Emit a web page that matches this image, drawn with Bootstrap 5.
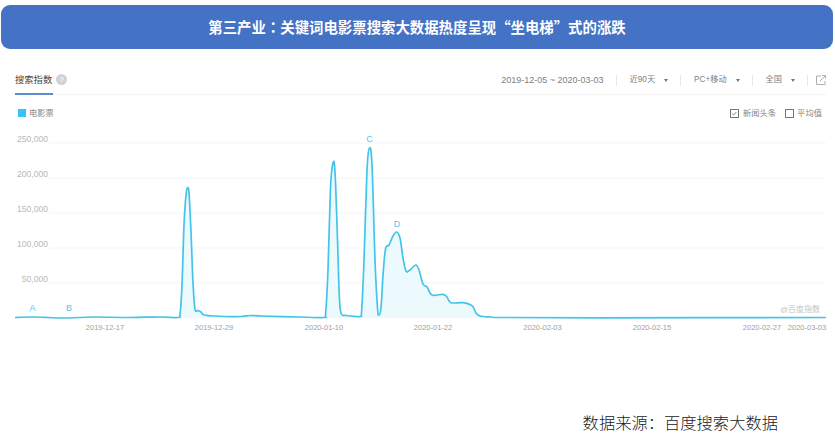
<!DOCTYPE html>
<html lang="zh-CN">
<head>
    <meta charset="UTF-8">
    <meta name="viewport" content="width=device-width, initial-scale=1.0">
    <title>搜索指数</title>
    <link href="https://cdn.jsdelivr.net/npm/bootstrap@5.3.3/dist/css/bootstrap.min.css" rel="stylesheet">
    <style>
        body { font-family: "Liberation Sans", "Noto Sans CJK SC", sans-serif; background: #fff; }
        .title-bar { height: 44px; margin: 5px 2px 0 1px; background: #4472c4; border-radius: 9px; font-family: "Noto Sans CJK SC", sans-serif; font-size: 14.4px; }
        .title-colon { font-family: "Noto Sans CJK TC", sans-serif; }
        .tab-row { height: 46px; margin: 0 9px 0 15px; border-bottom: 1px solid #f3f3f3; }
        .tab-on { height: 46px; margin-bottom: -1px; width: 38px; border-bottom: 2px solid #5b8ccf; color: #444; font-size: 9.3px; white-space: nowrap; padding-top: 24px; line-height: 14px; }
        .help-dot { width: 11px; height: 11px; background: #d2d2d2; color: #fff; font-size: 8px; line-height: 11px; text-align: center; margin-top: 25px; margin-left: 3px; }
        .tool-text { color: #808080; font-size: 8.2px; line-height: 14px; white-space: nowrap; padding-top: 24px; height: 38px; }
        .tool-date { font-size: 9px; }
        .tool-sep { width: 1px; height: 11px; background: #e8e8e8; margin-left: 12px; margin-right: 13px; }
        .tool-caret { width: 0; height: 0; border-left: 2px solid transparent; border-right: 2px solid transparent; border-top: 3px solid #777; margin-left: 9px; }
        .legend-row { height: 35px; margin: 0 13px 0 18px; color: #888; font-size: 8.3px; padding-top: 1px; }
        .legend-dot { width: 8px; height: 8px; background: #35c4f4; margin-right: 3px; }
        .tick-box { width: 9px; height: 9px; border: 1px solid #777; margin-right: 3px; }
        .tick-first { margin-right: 4px; }
        .tick-next { margin-left: 9px; }
        .chart-box { display: block; width: 835px; height: 210px; }
        .grid-line { stroke: #f5f5f5; stroke-width: 1; }
        .val-label { fill: #b9b9b9; font-size: 8.6px; text-anchor: end; }
        .date-label { fill: #a0a0a0; font-size: 7.5px; text-anchor: middle; }
        .point-label { fill: #55c6ef; font-size: 9px; text-anchor: middle; }
        .brand-label { fill: #c6c6c6; font-size: 8px; text-anchor: end; }
        .source-line { margin-top: 73px; padding-right: 57px; color: #222; font-family: "Noto Sans CJK SC", sans-serif; font-size: 16.3px; font-weight: 300; line-height: 19px; }
    </style>
</head>
<body>
    <div class="title-bar d-flex align-items-center justify-content-center text-white fw-bold"><span>第三产业<span class="title-colon" lang="zh-TW">：</span>关键词电影票搜索大数据热度呈现“坐电梯”式的涨跌</span></div>

    <div class="tab-row d-flex justify-content-between">
        <div class="d-flex">
            <div class="tab-on">搜索指数</div>
            <div class="help-dot rounded-circle">?</div>
        </div>
        <div class="d-flex align-items-center tool-text">
            <span class="tool-date">2019-12-05 ~ 2020-03-03</span>
            <span class="tool-sep"></span>
            <span>近90天</span><span class="tool-caret"></span>
            <span class="tool-sep"></span>
            <span>PC+移动</span><span class="tool-caret"></span>
            <span class="tool-sep"></span>
            <span>全国</span><span class="tool-caret"></span>
            <span class="tool-sep me-2"></span>
            <svg width="10" height="10" viewBox="0 0 10 10" fill="none" stroke="#999" stroke-width="0.8">
                <path d="M5 1H.5v8.500h8.500V6"/><path d="M4 6L9.300.7M6.300.5h3.200v3"/>
            </svg>
        </div>
    </div>

    <div class="legend-row d-flex justify-content-between align-items-center">
        <div class="d-flex align-items-center"><span class="legend-dot"></span><span>电影票</span></div>
        <div class="d-flex align-items-center">
            <svg class="tick-box tick-first" viewBox="0 0 9 9" fill="none" stroke="#666" stroke-width="1"><path d="M1.500 4.500l2 2 3.500-4"/></svg>
            <span>新闻头条</span>
            <span class="tick-box tick-next"></span>
            <span>平均值</span>
        </div>
    </div>

    <svg class="chart-box" id="chart" viewBox="0 130 835 210"></svg>

    <div class="source-line text-end">数据来源：百度搜索大数据</div>

    <script>
        var pts = [[15,317.5],[32,317],[48,317.5],[60,318],[80,317.5],[95,317],[130,317.5],[160,317],[178,317.5],[180,315],[182,285],[184,225],[186,195],[187.500,188],[189,193],[191,232],[193,283],[195,309],[198,310.500],[201,312],[204,315],[215,316],[240,316.500],[250,315.500],[262,316],[300,317],[324,317.500],[325.500,315],[328,270],[330.500,188],[333,163],[335,172],[337.500,240],[339.500,300],[341.500,314],[346,315.500],[360,316.500],[361.500,313],[364,260],[367,170],[369.500,148],[372,165],[375,260],[377.500,308],[379,315],[381,308],[383,275],[385.500,249],[389,245],[393,236],[396.700,232],[400,238],[403,258],[406,271],[410,270],[415.700,265],[419,270],[423,284],[427,287],[432,295],[443,294.300],[447,297],[451,302.700],[463,302.700],[472,305.700],[476,313],[480,316],[490,317],[505,317.500],[600,317.800],[826,317.500]];

        // catmull-rom through the points, control points held above the base line
        function linePath() {
            var d = "M" + pts[0][0] + " " + pts[0][1];
            for (var i = 0; i < pts.length - 1; i++) {
                var a = pts[Math.max(i - 1, 0)], b = pts[i], c = pts[i + 1], e = pts[Math.min(i + 2, pts.length - 1)];
                var y1 = Math.min(b[1] + (c[1] - a[1]) / 6, 318), y2 = Math.min(c[1] - (e[1] - b[1]) / 6, 318);
                d += "C" + (b[0] + (c[0] - a[0]) / 6).toFixed(1) + " " + y1.toFixed(1) + " " +
                    (c[0] - (e[0] - b[0]) / 6).toFixed(1) + " " + y2.toFixed(1) + " " + c[0] + " " + c[1];
            }
            return d;
        }

        var html = "";
        [[143,"250,000"],[178,"200,000"],[213,"150,000"],[248,"100,000"],[283,"50,000"]].forEach(function(g) {
            html += '<line class="grid-line" x1="49" x2="826" y1="' + g[0] + '" y2="' + g[0] + '"/>';
            html += '<text class="val-label" x="48" y="' + (g[0] - 1) + '">' + g[1] + '</text>';
        });
        html += '<path d="' + linePath() + 'L826 318L15 318Z" fill="#ecf9fd"/>';
        html += '<path d="' + linePath() + '" fill="none" stroke="#43c4ea" stroke-width="1.700"/>';
        [[105,"2019-12-17"],[214,"2019-12-29"],[324,"2020-01-10"],[433,"2020-01-22"],[542.500,"2020-02-03"],[652,"2020-02-15"],[762,"2020-02-27"],[807,"2020-03-03"]].forEach(function(t) {
            html += '<text class="date-label" x="' + t[0] + '" y="330">' + t[1] + '</text>';
        });
        [[32.500,311,"A"],[69,311,"B"],[369.500,142,"C"],[397,227,"D"]].forEach(function(p) {
            html += '<text class="point-label" x="' + p[0] + '" y="' + p[1] + '">' + p[2] + '</text>';
        });
        html += '<text class="brand-label" x="820" y="312">@百度指数</text>';
        document.getElementById("chart").innerHTML = html;
    </script>
    <script src="https://cdn.jsdelivr.net/npm/bootstrap@5.3.3/dist/js/bootstrap.bundle.min.js"></script>
</body>
</html>
